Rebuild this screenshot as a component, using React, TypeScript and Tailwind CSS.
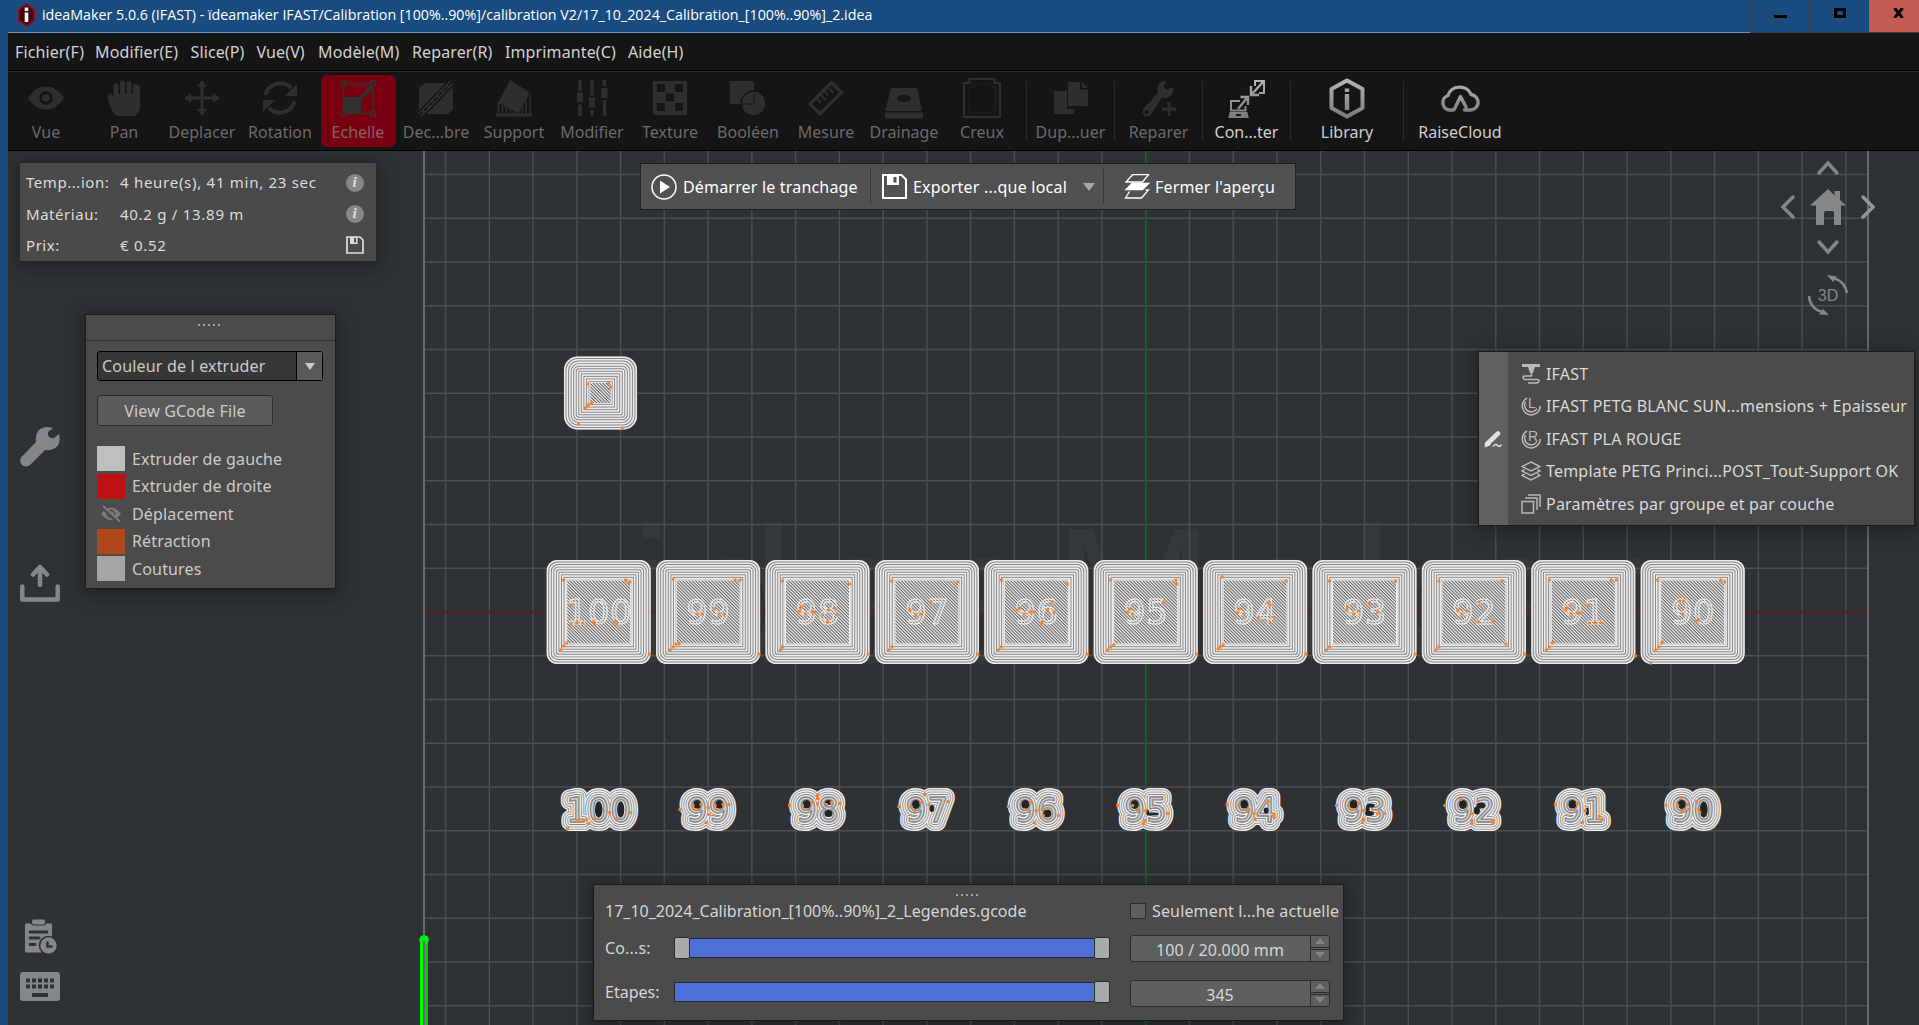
import type { ReactNode } from "react";

/* ---------- scene data ---------- */

const CELL = 43.76;
const CX = 1145.7;
const CY = 612;

type Dot = [number, number];

interface Part {
  label: string;
  top: Dot[];
  legend: Dot[];
  holes: [number, number, number, number][];
}

const NINE: [number, number, number, number] = [-11, -5, 4, 4.6];

const parts: Part[] = [
  {
    label: "100",
    top: [[-35, -32], [27, -32], [31, -30], [-28, -7], [-28, 12], [-22, 11], [-16, 11], [-5, 10], [-4, 12], [16, 10], [18, 12], [-32, 31], [-35, 34], [-38, 38], [51, 42]],
    legend: [[-31, 19], [-21, 11], [-15, 11], [-12, 10], [-10, 14], [-4, 9], [11, 3], [18, 9], [32, 3]],
    holes: [[0, 0, 3.8, 8.2], [22, 0, 3.6, 8.2]],
  },
  {
    label: "99",
    top: [[-35, -33], [27, -32], [32, -32], [6, -3], [-11, 2], [-6, 2], [11, 2], [16, 2], [-38, 38], [-35, 35], [-32, 32], [-29, 32], [51, 42]],
    legend: [[-28, 0], [-15, -4], [-12, 0], [-7, -5], [0, -2], [1, 5], [-2, 13], [7, -4], [10, 0], [15, -5], [21, -5]],
    holes: [NINE, [11, -5, 4, 4.6]],
  },
  {
    label: "98",
    top: [[-35, -31], [32, -28], [-16, -5], [-18, -1], [-12, 2], [-5, 0], [-3, 0], [11, -2], [17, -4], [5, 3], [19, 3], [10, 10], [-37, 38], [-35, 35], [51, 42]],
    legend: [[-28, -4], [-15, -4], [-11, 0], [-6, -7], [0, -14], [0, -11], [0, -6], [9, -5], [14, -7], [22, -6]],
    holes: [NINE, [11, -7, 3.4, 2.6], [11, 4, 4, 3.6]],
  },
  {
    label: "97",
    top: [[-35, -31], [31, -30], [-17, -2], [-11, 3], [-6, 2], [4, -10], [-35, 35], [-38, 38], [51, 42]],
    legend: [[-28, -3], [-16, -3], [-12, 1], [-6, -7], [2, -5], [-2, -15], [21, -8]],
    holes: [NINE, [5, -1, 2.4, 3.4]],
  },
  {
    label: "96",
    top: [[-35, -32], [31, -28], [-16, -4], [-19, -2], [-12, 2], [-6, 0], [-3, 0], [16, -10], [11, -2], [18, 0], [6, 10], [5, 12], [-35, 35], [-38, 38], [51, 42]],
    legend: [[-28, -3], [-6, -7], [-12, 0], [0, 1], [6, 0], [12, -1], [7, 6], [22, 6], [-2, 13]],
    holes: [NINE, [11, 4, 4, 4]],
  },
  {
    label: "95",
    top: [[-35, -32], [30, -32], [31, -28], [-16, -3], [-18, 0], [-13, 2], [18, -10], [-32, 33], [-35, 35], [-38, 38], [51, 42]],
    legend: [[-28, -4], [-13, -4], [-7, 0], [0, 1], [22, 4], [-1, 11], [-2, 14]],
    holes: [NINE, [7, 4.5, 6, 1.6], [2, 3, 1.4, 3]],
  },
  {
    label: "94",
    top: [[-33, -35], [31, -31], [-16, -3], [-18, 1], [-11, 2], [13, -9], [15, -7], [3, 6], [19, 5], [15, 11], [-32, 33], [-35, 35], [-37, 37], [51, 42]],
    legend: [[-28, -5], [-16, -4], [-11, 0], [-6, 0], [-1, 4], [0, 10], [13, -8], [19, 5], [19, 8]],
    holes: [NINE, [11, 1, 2.4, 3]],
  },
  {
    label: "93",
    top: [[-35, -31], [31, -31], [-17, -5], [-18, -2], [-11, 2], [-6, -1], [5, -9], [13, 0], [-35, 35], [-38, 38], [51, 42]],
    legend: [[-28, -4], [-16, -4], [-11, 0], [-6, -6], [-1, 1], [-1, 10], [-2, 13], [13, 4], [20, 4]],
    holes: [NINE, [6, -4, 4, 2], [5, 4, 4.5, 2.4], [3, 0, 2, 4]],
  },
  {
    label: "92",
    top: [[-35, -31], [28, -31], [-16, -2], [-7, -1], [-12, 2], [5, -10], [4, 10], [19, 10], [32, 32], [-35, 35], [-38, 38], [51, 42]],
    legend: [[-29, -4], [-2, 4], [-2, 11], [-2, 14], [19, 11], [19, 13], [-13, -10]],
    holes: [NINE, [7, -4, 4.5, 3], [3, 1, 3, 4]],
  },
  {
    label: "91",
    top: [[-34, -32], [28, -32], [33, -32], [-16, -4], [-18, -2], [-12, 2], [-6, 1], [-3, 1], [5, -7], [6, 11], [12, 11], [18, 11], [-31, 31], [-34, 35], [-37, 38], [52, 44]],
    legend: [[-28, -5], [-6, -6], [-11, 0], [2, 1], [-1, 13], [16, 7], [19, 10]],
    holes: [NINE, [4, 2, 1.6, 4]],
  },
  {
    label: "90",
    top: [[-35, -32], [28, -32], [32, -30], [-13, -11], [-9, -11], [-10, 2], [6, 8], [4, 9], [-31, 31], [-34, 35], [-37, 38], [-42, 51]],
    legend: [[-27, -4], [-12, -12], [-15, -4], [-5, -5], [-11, 1], [-4, 0], [4, -8], [6, 0], [7, 3]],
    holes: [NINE, [11, 0, 4, 8.2]],
  },
];

function Dots({ at }: { at: Dot[] }) {
  return (
    <g fill="#fb8128">
      {at.map(([x, y], i) => (
        <rect key={i} x={x - 1.5} y={y - 1.5} width={3} height={3} rx={0.6} />
      ))}
    </g>
  );
}

/* Concentric perimeters from an outer half-size down to the infill edge. */
function Block({ half, infill, radius }: { half: number; infill: number; radius: number }) {
  const rings: number[] = [];
  for (let h = half - 0.75; h > infill + 1.4; h -= 2.55) rings.push(h);
  return (
    <g>
      <rect x={-half} y={-half} width={half * 2} height={half * 2} rx={radius} fill="#858585" />
      {rings.map((h, i) => (
        <rect
          key={i}
          x={-h}
          y={-h}
          width={h * 2}
          height={h * 2}
          rx={Math.max(0, radius - i * 2.2)}
          fill="none"
          stroke="#ebebeb"
          strokeWidth={1.6}
        />
      ))}
      <rect x={-infill} y={-infill} width={infill * 2} height={infill * 2} fill="url(#infill)" stroke="#f2f2f2" strokeWidth={1} />
    </g>
  );
}

function Legend({ part, index }: { part: Part; index: number }) {
  const id = `legend-${index}`;
  const layers: ReactNode[] = [];
  for (let r = 9; r > 0.4; r -= 2.3) {
    layers.push(<use key={`a${r}`} href={`#${id}`} stroke="#efefef" strokeWidth={r * 2} />);
    layers.push(<use key={`b${r}`} href={`#${id}`} stroke="#868686" strokeWidth={Math.max(0.1, (r - 1.45) * 2)} />);
  }
  return (
    <g>
      <defs>
        <text id={id} x={0.5} y={12} textAnchor="middle" fontFamily="DejaVu Sans" fontSize={33} letterSpacing={1} strokeLinejoin="round">
          {part.label}
        </text>
      </defs>
      <g fill="#d0d0d0">{layers}</g>
      {part.holes.map(([x, y, rx, ry], i) => (
        <ellipse key={i} cx={x} cy={y} rx={rx} ry={ry} fill="#222527" />
      ))}
      <Dots at={part.legend} />
    </g>
  );
}

function Scene() {
  const cols = Array.from({ length: 33 }, (_, i) => CX + (i - 16) * CELL);
  const lines = Array.from({ length: 20 }, (_, i) => CY + (i - 10) * CELL);
  return (
    <svg className="absolute inset-0" width={1911} height={874} viewBox="8 151 1911 874">
      <defs>
        <pattern id="infill" width={2.3} height={4} patternUnits="userSpaceOnUse" patternTransform="rotate(-45)">
          <rect width={2.3} height={4} fill="#656565" />
          <rect width={1.15} height={4} fill="#f6f6f6" />
        </pattern>
      </defs>
      <text x={630} y={662} fontFamily="Liberation Sans" fontSize={193} letterSpacing={14.5} fill="#35393b">
        ideaMaker
      </text>
      <g stroke="#4c4e4f" strokeWidth={1.5}>
        {cols.map((x) => <path key={x} d={`M${x} 151V1025`} />)}
        {lines.map((y) => <path key={y} d={`M424 ${y}H1867`} />)}
      </g>
      <path d="M424 151V1025M1868 151V1025" stroke="#6b6866" strokeWidth={2} />
      <path d={`M${CX} 151V1025`} stroke="#0b6f10" strokeWidth={1.5} />
      <path d={`M425 ${CY}H1867`} stroke="#641418" strokeWidth={1.7} />

      <g transform="translate(600.5 393)">
        <Block half={36.5} infill={10.7} radius={13} />
        <Dots at={[[-13, -9], [8, -10], [10, -6], [-9, 10], [-12, 12], [-15, 15], [-22, 31], [22, 35]]} />
      </g>

      {parts.map((p, i) => {
        const x = CX + (i - 5) * CELL * 2.5;
        return (
          <g key={p.label}>
            <g transform={`translate(${x} ${CY})`}>
              <Block half={52} infill={32} radius={10} />
              <text x={0.5} y={12} textAnchor="middle" fontFamily="DejaVu Sans" fontSize={33} letterSpacing={1} fill="url(#infill)" stroke="#ededed" strokeWidth={1.1}>
                {p.label}
              </text>
              <Dots at={p.top} />
            </g>
            <g transform={`translate(${x} 809.5)`}>
              <Legend part={p} index={i} />
            </g>
          </g>
        );
      })}

      <path d="M420 940V1025H423V940Z" fill="#00ff0a" />
      <path d="M425 940V1025H428V940Z" fill="#12c412" />
      <circle cx={424} cy={940} r={4.8} fill="#00f50a" />
      <path d="M424 941V1025" stroke="#6b6866" strokeWidth={2} />
    </svg>
  );
}

/* ---------- toolbar icons, 40 x 44 boxes ---------- */

function ToolIcon({ children }: { children: ReactNode }) {
  return <svg width={40} height={44} viewBox="0 0 40 44" fill="currentColor" className="shrink-0">{children}</svg>;
}

const BAR = "#151515";

const icons: Record<string, ReactNode> = {
  vue: (
    <>
      <path d="M2 22C8 13 14 10.500 20 10.500S32 13 38 22C32 31 26 33.500 20 33.500S8 31 2 22Z" />
      <circle cx={20} cy={22} r={5.300} fill="none" stroke={BAR} strokeWidth={3} />
    </>
  ),
  pan: (
    <>
      <path d="M4 22Q4 17 6.500 17.500Q9 18 9.500 23V10Q9.500 7 12 7T14.500 10V18H16V7Q16 4.500 18.500 4.500T21 7V18H22.500V7.500Q22.500 5 25 5T27.500 7.500V18H29V10.500Q29 8 31.500 8T36 11V30Q36 36 31 40H13Q6 35 4 22Z" />
    </>
  ),
  move: (
    <path d="M20 4L25 11H21.500V20.500H31V17L38 22L31 27V23.500H21.500V33H25L20 40L15 33H18.500V23.500H9V27L2 22L9 17V20.500H18.500V11H15Z" />
  ),
  rotate: (
    <>
      <path d="M5.500 19A15 15 0 0 1 31 12" fill="none" stroke="currentColor" strokeWidth={4} />
      <path d="M37 8V20H25Z" />
      <path d="M34.500 25A15 15 0 0 1 9 32" fill="none" stroke="currentColor" strokeWidth={4} />
      <path d="M3 36V24H15Z" />
    </>
  ),
  scale: (
    <>
      <path d="M5.500 7.500H35V37.500H5.500Z" fill="none" stroke="currentColor" strokeWidth={1.4} />
      <path d="M5 21H23V38H5Z" />
      <path d="M22 21L29 13L27.500 11.500L34 10L33 17L31.500 15.500L24.500 22.500Z" />
      <g fill="#780010" stroke="currentColor" strokeWidth={1.6}>
        <rect x={3.500} y={5} width={4} height={4.500} />
        <rect x={33} y={5} width={4} height={4.500} />
        <rect x={3.500} y={35.500} width={4} height={4.500} />
        <rect x={33} y={35.500} width={4} height={4.500} />
      </g>
    </>
  ),
  cut: (
    <>
      <path d="M9 7H31L37 10V33L32 38H9L3 34V12Z" />
      <path d="M36 6L4 39" stroke={BAR} strokeWidth={8} />
      <path d="M36 6L4 39" stroke="currentColor" strokeWidth={5} />
      <path d="M36 6L4 39" stroke={BAR} strokeWidth={1.800} strokeDasharray="5 2" />
    </>
  ),
  support: (
    <>
      <path d="M16 4L35 16L34 20L25 37L4 27Z" />
      <path d="M4.500 26V38M8.500 30V38M12.500 31V38M16.500 33V38M20.500 35V38M24.500 36V38M28.500 30V38M32 24V38M36 17V38" stroke="currentColor" strokeWidth={1.500} />
      <path d="M2 37.500H38V40.500H2Z" />
    </>
  ),
  sliders: (
    <>
      <path d="M8 4V40M20 4V40M32.500 4V40" stroke="currentColor" strokeWidth={3.500} />
      <g stroke={BAR} strokeWidth={2}>
        <rect x={4} y={15.500} width={8} height={12} />
        <rect x={16} y={20.500} width={8} height={12} />
        <rect x={28.500} y={11} width={8} height={12} />
      </g>
    </>
  ),
  texture: (
    <>
      <path d="M3 5H37V39H3Z" />
      <g fill={BAR}>
        <rect x={7} y={8} width={8} height={8} />
        <rect x={25} y={8} width={8} height={8} />
        <rect x={16} y={17.500} width={8} height={8} />
        <rect x={7} y={27} width={8} height={8} />
        <rect x={25} y={27} width={8} height={8} />
      </g>
    </>
  ),
  bool: (
    <>
      <path d="M2 5H26V28H2Z" />
      <circle cx={25.500} cy={27.500} r={12.500} stroke={BAR} strokeWidth={1.500} />
      <path d="M14 28H26V17" fill="none" stroke={BAR} strokeWidth={1} />
    </>
  ),
  ruler: (
    <>
      <path d="M25.500 6.500L35.500 16.500L14 38L4 28Z" fill="none" stroke="currentColor" strokeWidth={3.200} />
      <path d="M11 22L14.500 27M14.500 18.500L20 24M18.500 15L22 19.500M22 11.500L27.500 17" stroke="currentColor" strokeWidth={2} />
    </>
  ),
  drain: (
    <>
      <path d="M7 12H33L38 34V35H1Z" />
      <path d="M1 36.500H39V42.500H1Z" />
      <ellipse cx={20} cy={22.500} rx={7} ry={3.500} fill={BAR} />
    </>
  ),
  hollow: (
    <g fill="none" stroke="currentColor">
      <path d="M7.500 3H32.500V7H38V41H2V7H7.500Z" strokeWidth={2.200} />
      <path d="M10.500 8H29.500V11H33.500V36H7V11H10.500Z" strokeWidth={0.500} />
    </g>
  ),
  duplicate: (
    <>
      <path d="M3 15H16V33H23V38H3Z" />
      <path d="M17 6H29V13.500H37V30H17Z" />
      <path d="M31 6L37 12H31Z" />
    </>
  ),
  repair: (
    <>
      <path d="M33 11L28 14L24.500 11L27 5Q20 5 18.500 11Q18 14 19 17L5 32Q2 36 5 39Q9 42 12.500 38L23 21.500Q30 24 34 17Q35 13 33 11Z" />
      <circle cx={7.500} cy={36} r={2.200} fill={BAR} />
      <path d="M30 26V40M23 33H37" stroke="currentColor" strokeWidth={2.800} />
    </>
  ),
  connect: (
    <g fill="none" stroke="url(#metal)" strokeWidth={2}>
      <path d="M13 25H4V34.500H18.500V30" />
      <path d="M3.500 37H19.500L20.500 41H2.500Z" fill="url(#metal)" />
      <path d="M11 33L20 22M13.500 21H21V29" strokeWidth={2.400} />
      <path d="M28 10V5H37V17H32" />
      <path d="M36 6L25 18M24 10V19H32" strokeWidth={2.400} />
      <path d="M9 39H14" stroke={BAR} />
    </g>
  ),
  library: (
    <>
      <path d="M20 4.500L35.500 13V32L20 40.500L4.500 32V13Z" fill="none" stroke="url(#metal)" strokeWidth={4} strokeLinejoin="round" />
      <path d="M17.800 18H22.200V34H17.800ZM17.800 12.500H22.200V16H17.800Z" fill="url(#metal)" />
    </>
  ),
  cloud: (
    <path d="M13.500 34H9A7.500 7.500 0 0 1 8 19.500A12 11 0 0 1 31 18.500A8 7.800 0 0 1 31 34H24.500M14.500 33L20.500 20.500L26 31" fill="none" stroke="url(#metal)" strokeWidth={3.400} strokeLinecap="round" strokeLinejoin="round" />
  ),
};

interface Tool {
  icon: string;
  label: string;
  box: string;
}

const mainTools: Tool[] = [
  { icon: "vue", label: "Vue", box: "text-[#2e2e2e]" },
  { icon: "pan", label: "Pan", box: "text-[#2e2e2e]" },
  { icon: "move", label: "Deplacer", box: "text-[#2e2e2e]" },
  { icon: "rotate", label: "Rotation", box: "text-[#2e2e2e]" },
  { icon: "scale", label: "Echelle", box: "rounded-md bg-[#780010] text-[#323232]" },
  { icon: "cut", label: "Dec...bre", box: "text-[#2e2e2e]" },
  { icon: "support", label: "Support", box: "text-[#2e2e2e]" },
  { icon: "sliders", label: "Modifier", box: "text-[#2e2e2e]" },
  { icon: "texture", label: "Texture", box: "text-[#2e2e2e]" },
  { icon: "bool", label: "Booléen", box: "text-[#2e2e2e]" },
  { icon: "ruler", label: "Mesure", box: "text-[#2e2e2e]" },
  { icon: "drain", label: "Drainage", box: "text-[#2e2e2e]" },
  { icon: "hollow", label: "Creux", box: "text-[#2e2e2e]" },
];

const extraTools = [
  { icon: "duplicate", label: "Dup...uer", cell: "w-[88px]", text: "text-[#6b6b6b]" },
  { icon: "repair", label: "Reparer", cell: "w-[88px]", text: "text-[#6b6b6b]" },
  { icon: "connect", label: "Con...ter", cell: "w-[88px]", text: "text-[#cfcfcf]" },
  { icon: "library", label: "Library", cell: "w-[113px]", text: "text-[#cfcfcf]" },
  { icon: "cloud", label: "RaiseCloud", cell: "w-[113px]", text: "text-[#cfcfcf]" },
];

function Toolbar() {
  return (
    <div className="flex h-[80px] border-y border-t-[#2c2c2c] border-b-black bg-[#151515] text-[#2e2e2e]">
      <svg width={0} height={0} className="absolute">
        <defs>
          <linearGradient id="metal" gradientUnits="userSpaceOnUse" x1={0} y1={4} x2={0} y2={40}>
            <stop offset="0" stopColor="#b4b4b4" />
            <stop offset="1" stopColor="#7c7c7c" />
          </linearGradient>
        </defs>
      </svg>
      <div className="-ml-px flex pt-[3px]">
        {mainTools.map((t) => (
          <div key={t.label} className="flex w-[78px] justify-center">
            <div className={`flex h-[72px] w-[75px] flex-col items-center pt-px ${t.box}`}>
              <ToolIcon>{icons[t.icon]}</ToolIcon>
              <span className={`h-6 leading-6 whitespace-nowrap ${t.icon === "scale" ? "text-[#7f6366]" : "text-[#6b6b6b]"}`}>{t.label}</span>
            </div>
          </div>
        ))}
      </div>
      <div className="ml-[5px] flex pt-[9px]">
        {extraTools.map((t) => (
          <div key={t.label} className={`${t.cell} flex h-[60px] flex-col items-center border-l border-[#2b2b2b]`}>
            <div className="-mt-[5px] h-[44px]">
              <ToolIcon>{icons[t.icon]}</ToolIcon>
            </div>
            <span className={`h-6 leading-6 whitespace-nowrap ${t.text}`}>{t.label}</span>
          </div>
        ))}
      </div>
    </div>
  );
}

/* ---------- floating panels ---------- */

const PANEL = "absolute border border-[#1b1c1c] bg-[#4a4b4a] shadow-[0_3px_16px_4px_rgba(0,0,0,0.28)]";

function Grip() {
  return (
    <div className="flex gap-[3px]">
      {[0, 1, 2, 3, 4].map((i) => <i key={i} className="size-[2px] bg-[#a5a5a5]" />)}
    </div>
  );
}

function InfoDot() {
  return (
    <span className="flex size-[18px] items-center justify-center rounded-full bg-[#868786] font-['Liberation_Serif'] text-[15px] leading-none font-bold text-[#e0e0e0] italic">
      i
    </span>
  );
}

function Floppy({ size }: { size: number }) {
  return (
    <svg width={size} height={size} viewBox="0 0 18 18">
      <path d="M1 1H14L17 4V17H1Z" fill="none" stroke="currentColor" strokeWidth={1.7} />
      <path d="M4 1H11.500V8H4Z" fill="currentColor" />
      <path d="M8 2H10V6.500H8Z" fill="#4d4d4d" />
    </svg>
  );
}

function Stats() {
  const rows: [string, string, ReactNode][] = [
    ["Temp...ion:", "4 heure(s), 41 min, 23 sec", <InfoDot key="t" />],
    ["Matériau:", "40.2 g / 13.89 m", <InfoDot key="m" />],
    ["Prix:", "€ 0.52", <Floppy key="p" size={18} />],
  ];
  return (
    <div className="absolute top-[12px] left-[12px] flex h-[98px] w-[356px] flex-col bg-[#494a49] pt-1 pr-3 pl-[6px] text-[15px] tracking-[0.72px] text-[#dcdcdc] shadow-[0_3px_16px_4px_rgba(0,0,0,0.28)]">
      {rows.map(([k, v, icon]) => (
        <div key={k} className="flex h-[31.5px] items-center">
          <span className="w-[94px] tracking-[0.55px] whitespace-nowrap">{k}</span>
          <span className="grow whitespace-nowrap">{v}</span>
          {icon}
        </div>
      ))}
    </div>
  );
}

function ExtruderPanel() {
  const rows: [string, string | null][] = [
    ["Extruder de gauche", "bg-[#bdc0bf]"],
    ["Extruder de droite", "bg-[#bd1010]"],
    ["Déplacement", null],
    ["Rétraction", "bg-[#b04919]"],
    ["Coutures", "bg-[#a3a6a5]"],
  ];
  return (
    <div className={`${PANEL} top-[163px] left-[77px] h-[275px] w-[251px] tracking-[0.15px] text-[#cbcbcb]`}>
      <div className="flex h-[26px] justify-center border-b border-[#2f3130] pt-[9px] pr-[3px]">
        <Grip />
      </div>
      <div className="flex flex-col pt-[10px] pl-[11px]">
        <div className="flex h-[30px] w-[226px] rounded-[3px] border border-black bg-[#363837] leading-[28px]">
          <span className="grow pl-1 tracking-[0.18px] whitespace-nowrap">Couleur de l extruder</span>
          <span className="flex w-[26px] items-center justify-center border-l border-black bg-[#585a59]">
            <svg width={10} height={7} viewBox="0 0 10 7"><path d="M0 0H10L5 7Z" fill="#cbcbcb" /></svg>
          </span>
        </div>
        <div className="mt-[14px] h-[31px] w-[176px] rounded-[3px] border border-[#2a2b2b] bg-[#595b5a] text-center leading-[30px]">
          View GCode File
        </div>
        <div className="mt-[20px] flex flex-col gap-[2.5px]">
          {rows.map(([label, swatch]) => (
            <div key={label} className="flex h-[25px] items-center gap-[7px]">
              {swatch ? (
                <span className={`h-full w-7 ${swatch}`} />
              ) : (
                <span className="flex w-7 justify-center">
                  <svg width={22} height={18} viewBox="0 0 22 18">
                    <path d="M1 9Q6 2.500 11 2.500T21 9Q16 15 11 15T1 9Z" fill="#7d7e7d" />
                    <circle cx={11} cy={9} r={3.600} fill="none" stroke="#4a4b4a" strokeWidth={1.600} />
                    <path d="M1.500 2L18 17" stroke="#4a4b4a" strokeWidth={3} />
                    <path d="M3 1L20 16.500" stroke="#7d7e7d" strokeWidth={1.700} />
                  </svg>
                </span>
              )}
              <span className="whitespace-nowrap">{label}</span>
            </div>
          ))}
        </div>
      </div>
    </div>
  );
}

function ActionBar() {
  return (
    <div className="absolute top-[12px] left-[632px] flex h-[47px] w-[656px] items-center border border-[#1e1f1f] bg-[#515151] tracking-[0.18px] whitespace-nowrap text-white">
      <div className="flex w-[229px] items-center gap-[6px] pl-[10px]">
        <svg width={26} height={26} viewBox="0 0 26 26">
          <circle cx={13} cy={13} r={12} fill="none" stroke="#fff" strokeWidth={1.500} />
          <path d="M9 6.500L19 13L9 19.500Z" fill="#fff" />
        </svg>
        <span>Démarrer le tranchage</span>
      </div>
      <div className="flex h-[35px] w-[233px] items-center border-l border-[#363636] pl-[11px]">
        <svg width={25} height={25} viewBox="0 0 25 25">
          <path d="M1 1H19.500L24 5.500V24H1Z" fill="none" stroke="#fff" strokeWidth={2} />
          <path d="M5 1H17V11H5Z" fill="#fff" />
          <path d="M11.500 3H14.500V8.500H11.500Z" fill="#515151" />
        </svg>
        <span className="pr-4 pl-[6px] tracking-[0.22px]">Exporter ...que local</span>
        <svg width={12} height={8} viewBox="0 0 12 8"><path d="M0 0H12L6 8Z" fill="#a8a8a8" /></svg>
      </div>
      <div className="flex h-[35px] items-center gap-[5px] border-l border-[#363636] pl-5">
        <svg width={26} height={25} viewBox="0 0 26 25" stroke="#fff" strokeWidth={1.300}>
          <path d="M8.500 0.700H24.500L18.500 8H2Z" fill="none" />
          <path d="M8 9.500H24.500L18.500 15.500H2Z" fill="#fff" />
          <path d="M5.500 17.500L1.500 24H17.500L24.500 16H21.500" fill="none" />
        </svg>
        <span>Fermer l'aperçu</span>
      </div>
    </div>
  );
}

function Spool({ letter }: { letter: string }) {
  return (
    <>
      <path d="M6 2A9 9 0 1 0 19.300 10" fill="none" stroke="currentColor" strokeWidth={1.500} />
      <path d="M4.500 6A6.300 6.300 0 1 0 16 12.500" fill="none" stroke="currentColor" strokeWidth={1.500} />
      <text x={7} y={11.500} fontFamily="Liberation Sans" fontSize={14} fill="currentColor">{letter}</text>
    </>
  );
}

function ProfilePanel() {
  const rows: [string, ReactNode][] = [
    ["IFAST", (
      <>
        <path d="M1 0H19V3H14L12 9H9L7 3H1Z" fill="currentColor" />
        <path d="M10.500 8V12H4Q2 12 2 13.500T4 15.500H16Q18 15.500 18 17T16 19H7" fill="none" stroke="currentColor" strokeWidth={1.500} />
      </>
    )],
    ["IFAST PETG BLANC SUN...mensions + Epaisseur", <Spool key="l" letter="L" />],
    ["IFAST PLA ROUGE", <Spool key="r" letter="R" />],
    ["Template PETG Princi...POST_Tout-Support OK", (
      <g fill="none" stroke="currentColor" strokeWidth={1.500}>
        <path d="M10 1L19 5.500L10 10L1 5.500Z" />
        <path d="M3.500 8.500L1 10L10 14.500L19 10L16.500 8.500" />
        <path d="M3.500 13L1 14.500L10 19L19 14.500L16.500 13" />
      </g>
    )],
    ["Paramètres par groupe et par couche", (
      <g fill="none" stroke="currentColor" strokeWidth={1.500}>
        <path d="M1 7.500H12.500V19H1Z" />
        <path d="M4 4H16V16M7 1H19V13" />
      </g>
    )],
  ];
  return (
    <div className={`${PANEL} top-[200px] left-[1470px] flex h-[175px] w-[437px] tracking-[0.2px] whitespace-nowrap text-[#dadada]`}>
      <div className="flex w-[29px] items-center justify-center bg-[#606160] pr-[2px]">
        <svg width={18} height={18} viewBox="0 0 18 18" fill="none" stroke="#e2e2e2" strokeLinecap="round">
          <path d="M3 14L14 3.500" strokeWidth={4.500} />
          <path d="M1 16.500L3 11.500L6 14.500Z" strokeWidth={1} fill="#e2e2e2" />
          <path d="M9.500 16Q11.500 13.500 13.500 15.500T17 15" strokeWidth={1.500} />
        </svg>
      </div>
      <div className="flex flex-col pt-[5.5px] pl-[13px]">
        {rows.map(([label, icon]) => (
          <div key={label} className="flex h-[32.5px] items-center gap-[5px]">
            <svg width={20} height={20} viewBox="0 0 20 20" className="text-[#b9b9b9]">{icon}</svg>
            <span>{label}</span>
          </div>
        ))}
      </div>
    </div>
  );
}

function Spin({ value }: { value: string }) {
  return (
    <div className="flex h-[27px] w-[200px] rounded-[3px] border border-[#2b2c2c] bg-[#5e605f]">
      <span className="grow pr-px text-center leading-7">{value}</span>
      <span className="flex w-[19px] flex-col border-l border-[#2b2c2c]">
        <span className="flex grow items-center justify-center border-b border-[#2b2c2c]">
          <svg width={10} height={6} viewBox="0 0 10 6"><path d="M0 6H10L5 0Z" fill="#828382" /></svg>
        </span>
        <span className="mt-px flex grow items-center justify-center border-t border-[#2b2c2c]">
          <svg width={10} height={6} viewBox="0 0 10 6"><path d="M0 0H10L5 6Z" fill="#828382" /></svg>
        </span>
      </span>
    </div>
  );
}

function Handle() {
  return <span className="h-[22px] w-[16px] rounded-[2px] border border-[#2b2c2c] bg-[#a8aaa9]" />;
}

function PlaybackPanel() {
  return (
    <div className={`${PANEL} top-[733px] left-[585px] h-[137px] w-[751px] text-[#d6d6d6]`}>
      <div className="flex h-[14px] justify-center pt-[9px] pr-1"><Grip /></div>
      <div className="flex h-[24px] items-center pl-[11px] whitespace-nowrap">
        <span className="w-[525px]">17_10_2024_Calibration_[100%..90%]_2_Legendes.gcode</span>
        <span className="size-4 border border-[#2b2c2c] bg-[#5e605f]" />
        <span className="pl-[6px] tracking-[0.15px]">Seulement l...he actuelle</span>
      </div>
      <div className="mt-[10px] flex h-[29px] items-center pl-[11px]">
        <span className="w-[69px] tracking-[0.15px]">Co...s:</span>
        <div className="flex h-5 w-[436px] items-center justify-between border border-[#25272f] bg-[#4f70d8]">
          <span className="-ml-px flex"><Handle /></span>
          <span className="-mr-px flex"><Handle /></span>
        </div>
        <div className="mt-px ml-5 tracking-[0.15px]"><Spin value="100 / 20.000 mm" /></div>
      </div>
      <div className="mt-[15px] flex h-[29px] items-center pl-[11px]">
        <span className="w-[69px]">Etapes:</span>
        <div className="flex h-5 w-[436px] items-center justify-end border border-[#25272f] bg-[#4f70d8]">
          <span className="-mr-px flex"><Handle /></span>
        </div>
        <div className="mt-[3px] ml-5"><Spin value="345" /></div>
      </div>
    </div>
  );
}

/* ---------- edge controls ---------- */

function SideIcons() {
  return (
    <div className="absolute top-0 left-[12px] h-full w-10 text-[#858688]">
      <div className="flex h-full flex-col pt-[275px]">
        <svg width={40} height={41} viewBox="0 0 40 41" className="shrink-0">
          <path d="M33 2L28 6V9Q30 13 34 12L39 8Q41 15 37.500 20Q33 25 25 24L10 39Q6 42 2 39Q-1.500 35 1.500 31L16 16Q15 9 18.500 4.500Q24 -1 33 2Z" fill="currentColor" />
        </svg>
        <svg width={40} height={40} viewBox="0 0 40 40" className="mt-[96px] shrink-0" fill="none" stroke="currentColor" strokeWidth={4.500} strokeLinecap="round" strokeLinejoin="round">
          <path d="M20 22V4M13 11.500L20 4L27 11.500" />
          <path d="M2.300 23.500V36.500H37.700V23.500" />
        </svg>
        <svg width={32} height={36} viewBox="0 0 32 36" className="mt-[316px] ml-[5px] shrink-0">
          <rect x={0} y={4.500} width={27} height={29} rx={1} fill="currentColor" />
          <rect x={6.500} y={0} width={14} height={6} rx={2} fill="currentColor" stroke="#2e3235" strokeWidth={1.200} />
          <path d="M5 13H22M5 19H14M5 25.500H10" stroke="#2e3235" strokeWidth={2.800} strokeLinecap="round" />
          <circle cx={23.500} cy={26.500} r={9} fill="currentColor" stroke="#2e3235" strokeWidth={1.600} />
          <path d="M22.500 22.500V27.500H27.500" fill="none" stroke="#2e3235" strokeWidth={2.400} />
        </svg>
        <svg width={40} height={29} viewBox="0 0 40 29" className="mt-[17px] shrink-0">
          <rect width={40} height={29} rx={3} fill="currentColor" />
          <path d="M6 8.500H34M6 14.500H34" stroke="#2e3235" strokeWidth={4} strokeDasharray="4 2" />
          <path d="M12 23H28" stroke="#2e3235" strokeWidth={4} />
        </svg>
      </div>
    </div>
  );
}

function ViewCube() {
  return (
    <div className="absolute top-[7px] left-[1770px] flex w-[100px] flex-col items-center text-[#858688]">
      <svg width={24} height={18} viewBox="0 0 24 18" fill="none" stroke="currentColor" strokeWidth={3.500} strokeLinecap="round"><path d="M3 15L12 5L21 15" /></svg>
      <div className="mt-[11px] flex items-center gap-[12px]">
        <svg width={18} height={28} viewBox="0 0 18 28" fill="none" stroke="currentColor" strokeWidth={3.500} strokeLinecap="round"><path d="M15 4L5 14L15 24" /></svg>
        <svg width={40} height={40} viewBox="0 0 40 40">
          <path d="M20 2L26.500 8.500V4H32V13L38 18.500H33V38H26V26Q26 24 24 24H18Q16 24 16 26V38H8V18.500H2Z" fill="currentColor" />
        </svg>
        <svg width={18} height={28} viewBox="0 0 18 28" fill="none" stroke="#959697" strokeWidth={3.500} strokeLinecap="round"><path d="M3 4L13 14L3 24" /></svg>
      </div>
      <svg width={24} height={18} viewBox="0 0 24 18" className="mt-[12px]" fill="none" stroke="currentColor" strokeWidth={3.500} strokeLinecap="round"><path d="M3 3L12 13L21 3" /></svg>
      <svg width={42} height={42} viewBox="0 0 42 42" className="mt-[17px]">
        <path d="M2 22Q3 34.500 15 38M27 4Q38 8 40 19" fill="none" stroke="currentColor" strokeWidth={2.600} />
        <path d="M22 41L12 40.500L16 35Z M20 1L30 2.500L26 8Z" fill="currentColor" />
        <text x={21} y={26.500} textAnchor="middle" fontFamily="Liberation Sans" fontSize={16} fill="currentColor">3D</text>
      </svg>
    </div>
  );
}

/* ---------- window ---------- */

function TitleBar() {
  return (
    <div className="flex h-[33px] bg-[#1a4c7f] pl-2">
      <div className="flex grow items-center border-b border-[#6f93b5] pb-[3px] pl-[10px]">
        <svg width={17} height={24} viewBox="0 0 17 24">
          <path d="M8.500 0L17 6V18L8.500 24L0 18V6Z" fill="#8c0a1c" />
          <path d="M8.500 2L15 7V17L8.500 22L2 17V7Z" fill="#3d050c" />
          <path d="M6.700 9.500H10.300V19H6.700ZM6.700 4.500H10.300V8H6.700Z" fill="#f4f4f4" />
        </svg>
        <span className="pl-[7px] font-['Open_Sans','Noto_Sans',sans-serif] text-[14.26px] whitespace-pre text-white">
          ideaMaker 5.0.6 (IFAST) - ïdeamaker IFAST/Calibration [100%..90%]/calibration V2/17_10_2024_Calibration_[100%..90%]_2.idea
        </span>
      </div>
      <div className="flex border-b border-[#3c3f45]">
        <div className="flex w-[60px] justify-center border-l border-[#3c3f45] pt-[15px]"><span className="h-[3px] w-[13px] bg-black" /></div>
        <div className="flex w-[59px] justify-center border-l border-[#3c3f45] pt-2"><span className="h-[10px] w-3 border-[3px] border-black" /></div>
        <div className="flex w-[50px] justify-center bg-[#c25b51] pt-2 pl-[8px]">
          <svg width={11} height={10} viewBox="0 0 11 10"><path d="M1.500 0L9.500 10M9.500 0L1.500 10" stroke="#000" strokeWidth={3} /></svg>
        </div>
      </div>
    </div>
  );
}

const menus = [
  ["Fichier(F)", "w-[80px]"],
  ["Modifier(E)", "w-[95.5px]"],
  ["Slice(P)", "w-[66px]"],
  ["Vue(V)", "w-[61.5px]"],
  ["Modèle(M)", "w-[94px]"],
  ["Reparer(R)", "w-[93px]"],
  ["Imprimante(C)", "w-[123px]"],
  ["Aide(H)", "w-[80px]"],
];

export default function App() {
  return (
    <div className="flex h-[1025px] w-[1919px] flex-col overflow-hidden bg-[#1a4c7f] font-['Noto_Sans','Open_Sans',sans-serif] text-[16px]">
      <TitleBar />
      <div className="flex grow flex-col pl-2">
        <nav className="flex h-[38px] items-center border-b border-black bg-[#151515] pl-[7px] tracking-[0.12px] whitespace-nowrap text-[#d2d2d2]">
          {menus.map(([label, w]) => <span key={label} className={w}>{label}</span>)}
        </nav>
        <Toolbar />
        <main className="relative h-[874px] overflow-hidden bg-[#2e3235]">
          <Scene />
          <SideIcons />
          <Stats />
          <ExtruderPanel />
          <ActionBar />
          <ViewCube />
          <ProfilePanel />
          <PlaybackPanel />
        </main>
      </div>
    </div>
  );
}
